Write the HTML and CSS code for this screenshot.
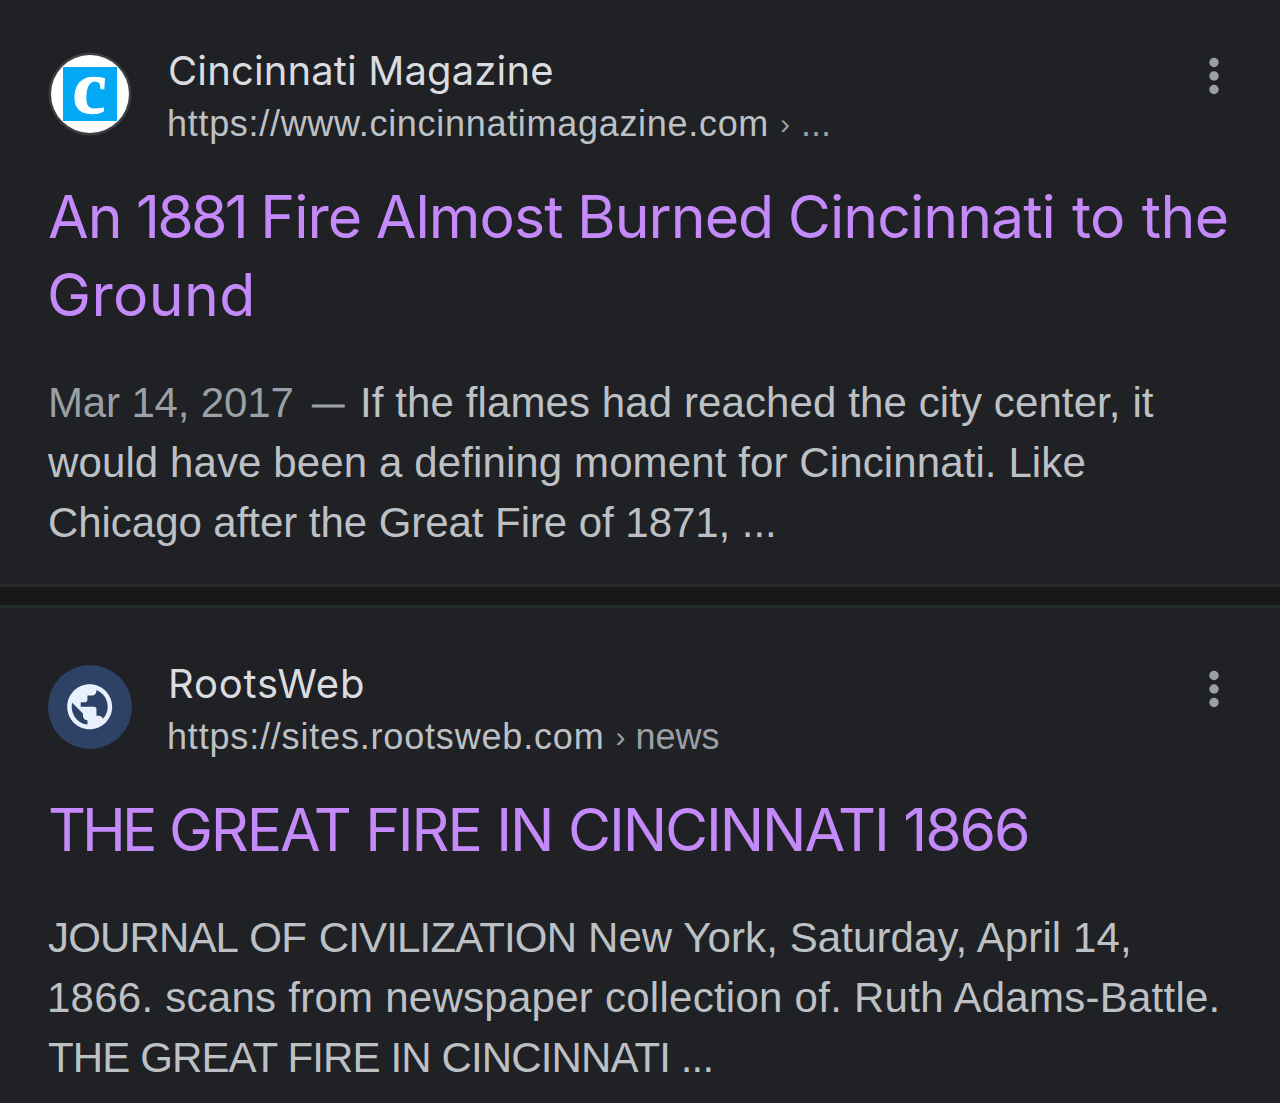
FILE: index.html
```
<!DOCTYPE html>
<html lang="en">
<head>
  <meta charset="UTF-8">
  <meta name="viewport" content="width=device-width, initial-scale=1.0">
  <title>Search Results</title>
  <link rel="stylesheet" href="styles.css">
</head>
<body>
  <div class="results">
    <!-- Cincinnati Magazine -->
    <div class="result">
      <div class="header">
        <svg class="favicon" viewBox="0 0 84 84">
          <circle cx="42" cy="42" r="41.5" fill="#3c3e41"/>
          <circle cx="42" cy="42" r="39" fill="#fff"/>
          <rect x="15" y="15" width="54" height="54" fill="#03a9f4"/>
          <text class="logo-letter" transform="translate(23.5 60.5) skewX(-3)">c</text>
        </svg>
        <div class="source">
          <div class="site site-magazine">Cincinnati Magazine</div>
          <div class="url"><span class="url-magazine">https://www.cincinnatimagazine.com</span><span class="sep">›</span><span class="crumb-dots">...</span></div>
        </div>
        <svg class="menu" viewBox="0 0 12 40">
          <circle cx="6" cy="6.5" r="4.7"/>
          <circle cx="6" cy="20" r="4.7"/>
          <circle cx="6" cy="33.5" r="4.7"/>
        </svg>
      </div>
      <h3 class="title">
        <span class="line t1">An <span class="year">1881</span> Fire Almost Burned Cincinnati<span class="tail"> to the</span></span>
        <span class="line t2">Ground</span>
      </h3>
      <p class="snippet">
        <span class="line first"><span class="date">Mar 14, 2017 <span class="dash">—</span></span><span class="s1">If the flames had reached the city center, it</span></span>
        <span class="line s2">would have been a defining moment for Cincinnati. Like</span>
        <span class="line s3">Chicago after the Great Fire of 1871, ...</span>
      </p>
    </div>

    <div class="divider"></div>

    <!-- RootsWeb -->
    <div class="result">
      <div class="header">
        <svg class="favicon" viewBox="0 0 84 84">
          <circle cx="42" cy="42" r="42" fill="#2d4265"/>
          <path transform="translate(14.7 14.7) scale(2.25)" fill="#e8f0fe" d="M12 2C6.48 2 2 6.48 2 12s4.48 10 10 10 10-4.48 10-10S17.52 2 12 2zm-1 17.93c-3.95-.49-7-3.85-7-7.93 0-.62.08-1.21.21-1.79L9 15v1c0 1.1.9 2 2 2v1.93zm6.9-2.54c-.26-.81-1-1.39-1.9-1.39h-1v-3c0-.55-.45-1-1-1H8v-2h2c.55 0 1-.45 1-1V7h2c1.1 0 2-.9 2-2v-.41c2.93 1.19 5 4.06 5 7.41 0 2.08-.8 3.97-2.1 5.39z"/>
        </svg>
        <div class="source">
          <div class="site site-roots">RootsWeb</div>
          <div class="url"><span class="url-roots">https://sites.rootsweb.com</span><span class="sep">›</span><span class="crumb">news</span></div>
        </div>
        <svg class="menu" viewBox="0 0 12 40">
          <circle cx="6" cy="6.5" r="4.7"/>
          <circle cx="6" cy="20" r="4.7"/>
          <circle cx="6" cy="33.5" r="4.7"/>
        </svg>
      </div>
      <h3 class="title">
        <span class="line t3"><span class="narrow">THE</span> GREAT FIRE IN CINCINNATI 1866</span>
      </h3>
      <p class="snippet">
        <span class="line s4"><span class="caps">JOURNAL OF CIVILIZATION</span> New York, Saturday, April 14,</span>
        <span class="line s5">1866. scans from newspaper collection of. Ruth Adams-Battle.</span>
        <span class="line s6">THE GREAT FIRE IN CINCINNATI ...</span>
      </p>
    </div>
  </div>
</body>
</html>
```
FILE: styles.css
```
* {
  box-sizing: border-box;
}

body {
  margin: 0;
  background: #202124;
  font-family: "Liberation Sans", Arial, sans-serif;
  font-kerning: normal;
}

.results {
  height: 1103px;
  overflow: hidden;
}

.result {
  padding: 52px 48px 0;
}

.result:first-child {
  height: 584px;
}

.result:last-child {
  padding-top: 57px;
}

.divider {
  height: 24px;
  background: #191818;
  border-top: 3px solid #28292b;
  border-bottom: 3px solid #232b2a;
}

.header {
  display: flex;
  height: 84px;
}

.favicon {
  width: 84px;
  height: 84px;
  overflow: visible;
}

.logo-letter {
  font-family: "Liberation Serif", serif;
  font-weight: bold;
  font-size: 76px;
  fill: #fff;
  stroke: #fff;
  stroke-width: 1px;
}

.source {
  flex: 1;
  margin-left: 36px;
  white-space: nowrap;
}

.site {
  font-family: Inter, sans-serif;
  font-size: 40px;
  line-height: 48px;
  margin-top: -5px;
  color: #dadce0;
}

.site-magazine {
  letter-spacing: 0.13px;
}

.site-roots {
  letter-spacing: 0.8px;
}

.url {
  display: flex;
  font-size: 36px;
  line-height: 42px;
  margin-top: 8px;
  margin-left: -1px;
  color: #bdc1c6;
}

.url-magazine {
  letter-spacing: 0.7px;
}

.url-roots {
  letter-spacing: 0.82px;
}

.sep {
  width: 10px;
  margin: 0 11px;
  font-size: 30px;
  color: #9aa0a6;
}

.crumb {
  letter-spacing: 0;
  margin-left: -1px;
  color: #9aa0a6;
}

.crumb-dots {
  color: #9aa0a6;
}

.menu {
  width: 12px;
  height: 40px;
  margin: 4px 12px 0 0;
  fill: #9aa0a6;
}

.line {
  display: block;
  white-space: nowrap;
}

.title {
  margin: 42px 0 0;
  font-family: Inter, sans-serif;
  font-size: 59px;
  font-weight: 400;
  line-height: 78px;
  color: #c58af9;
}

.t1 {
  letter-spacing: -0.95px;
  word-spacing: -1.2px;
}

.year {
  letter-spacing: -2.8px;
}

.tail {
  letter-spacing: -0.6px;
  word-spacing: 1px;
}

.t2 {
  letter-spacing: 0.4px;
  margin-left: -1px;
}

.t3 {
  letter-spacing: -2.1px;
  word-spacing: 1px;
}

.narrow {
  letter-spacing: -4px;
}

.snippet {
  margin: 39px 0 0;
  font-size: 42px;
  line-height: 60px;
  color: #bdc1c6;
}

.first {
  display: flex;
}

.date {
  display: flex;
  justify-content: space-between;
  align-items: center;
  width: 312px;
  padding-right: 16px;
  letter-spacing: -0.15px;
  color: #9aa0a6;
}

.dash {
  font-size: 32px;
  -webkit-text-stroke: 0.8px #9aa0a6;
}

.s1 {
  letter-spacing: 0.1px;
}

.s2 {
  letter-spacing: 0.11px;
}

.s3 {
  letter-spacing: -0.05px;
}

.s4 {
  letter-spacing: 0.1px;
}

.caps {
  letter-spacing: -0.85px;
  word-spacing: 2px;
}

.s5 {
  letter-spacing: 0.26px;
  margin-left: -1px;
}

.s6 {
  letter-spacing: -0.87px;
}
```
